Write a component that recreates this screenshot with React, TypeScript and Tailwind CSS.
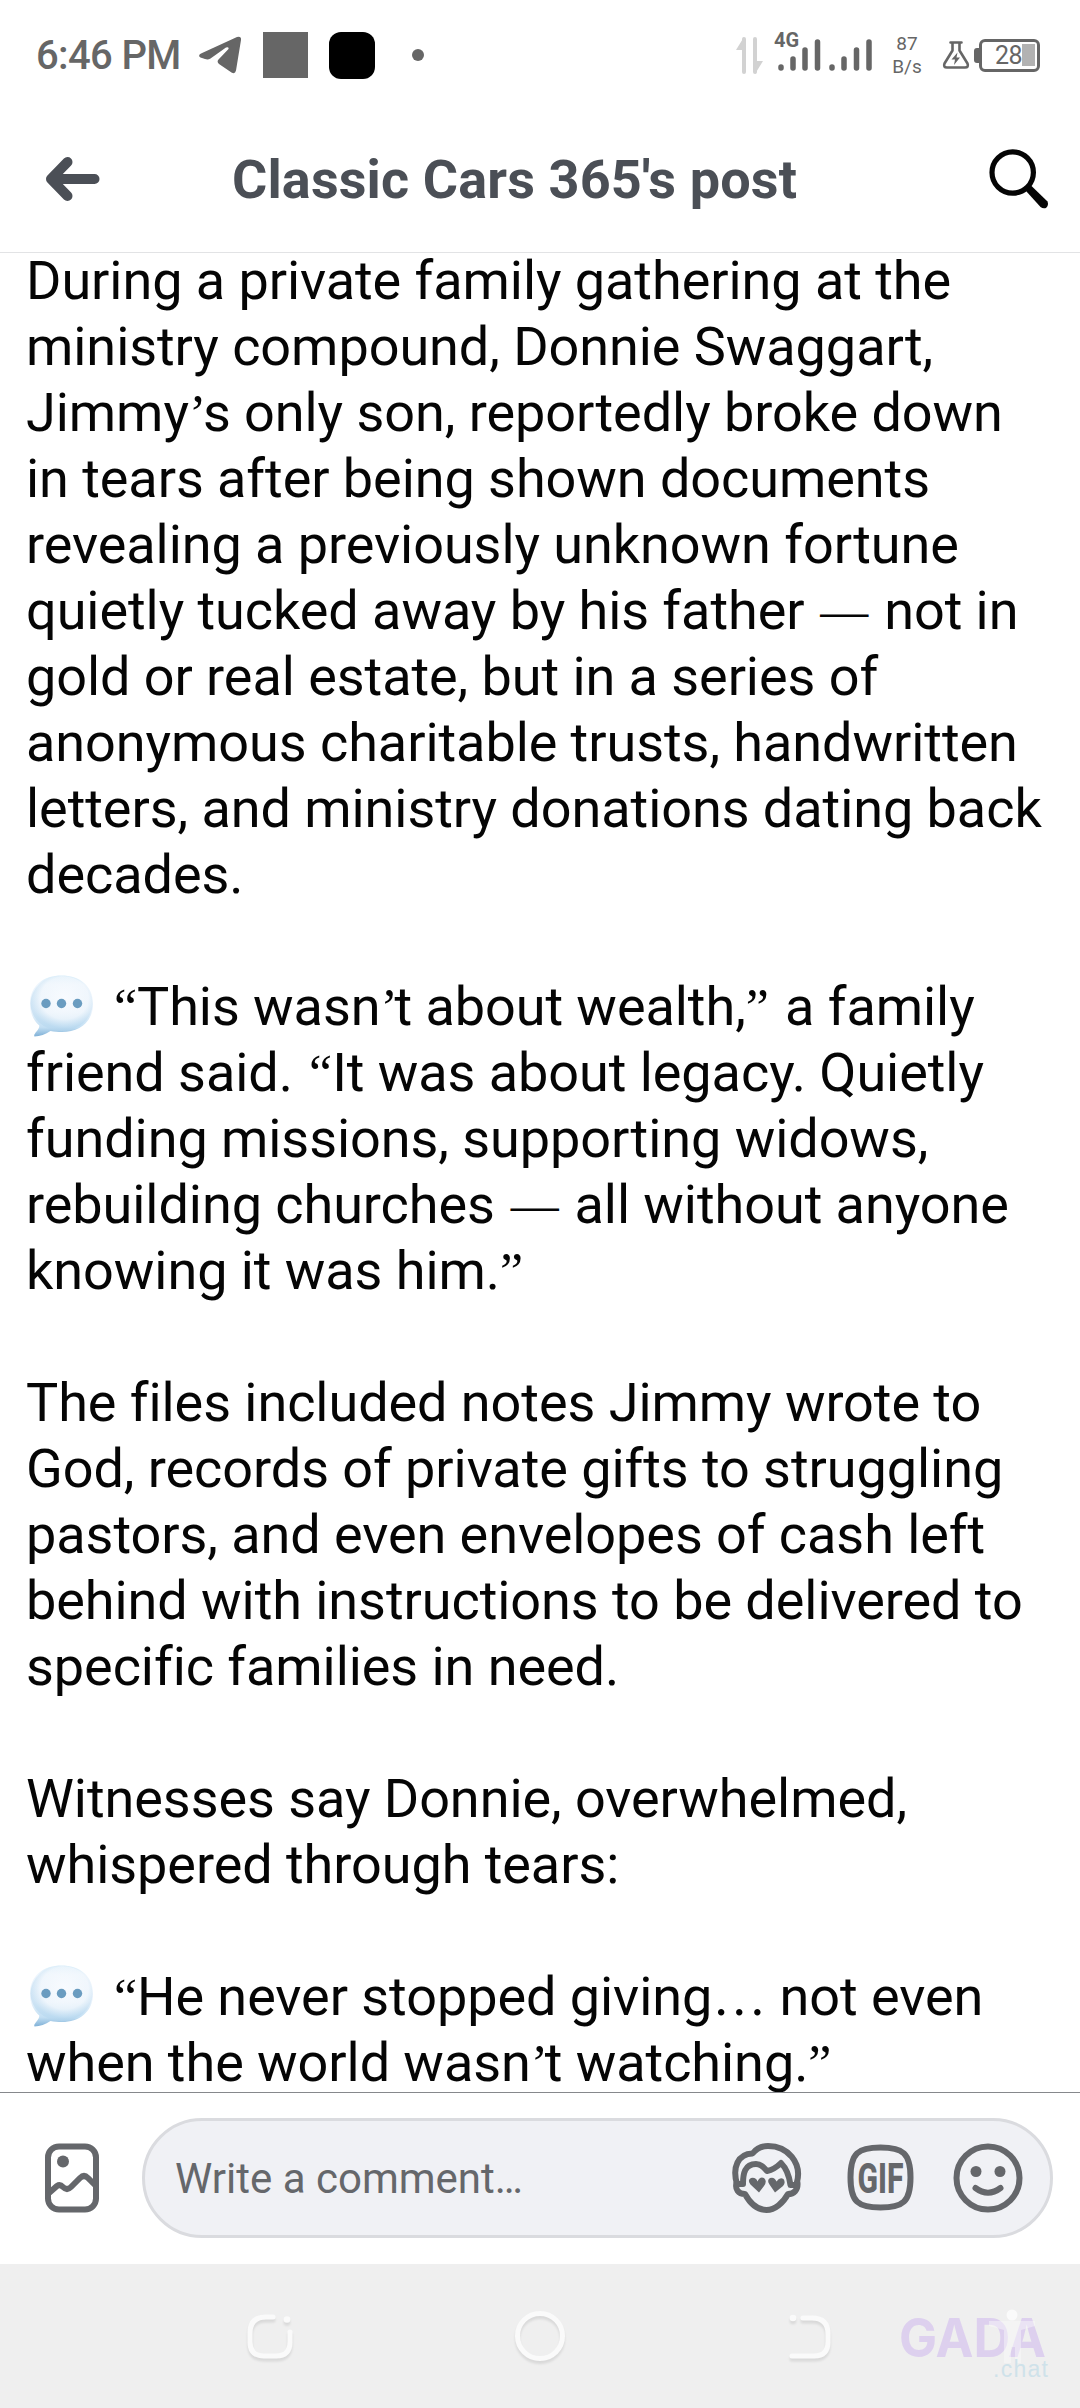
import React from "react";

const GREY = "#65676b";

function Bubble() {
  return (
    <svg className="ml-[4px] mr-[18px] inline-block h-[62px] w-[63px] align-[-12px]" viewBox="0 0 63 62">
      <defs>
        <linearGradient id="bub" x1="0" y1="0" x2="0" y2="1">
          <stop offset="0" stopColor="#d9edf9" />
          <stop offset="0.15" stopColor="#edf5fc" />
          <stop offset="0.6" stopColor="#e8f2fb" />
          <stop offset="0.85" stopColor="#c3dff3" />
          <stop offset="1" stopColor="#7fb0d6" />
        </linearGradient>
        <radialGradient id="shine" cx="0.55" cy="0.4" r="0.55">
          <stop offset="0" stopColor="#fafcff" stopOpacity="0.9" />
          <stop offset="0.7" stopColor="#f3f8fd" stopOpacity="0.6" />
          <stop offset="1" stopColor="#b4d6ee" stopOpacity="0.5" />
        </radialGradient>
      </defs>
      <path
        d="M31.5 0.5C49 0.5 63 10 63 29C63 47 49 57 32 57C28 57 24 56.600 20.500 56C15.500 59 10 61.500 4.500 61.500C3.500 60 5 58.500 6.500 56.500C8.500 54 9.500 52 9.300 50.500C3.500 45.500 0 38 0 29C0 10 14 0.500 31.500 0.500Z"
        fill="url(#bub)"
      />
      <ellipse cx="31.500" cy="28.500" rx="31" ry="27.500" fill="url(#shine)" />
      <circle cx="16" cy="28.500" r="4.700" fill="#6a9cc0" />
      <circle cx="31.500" cy="28.500" r="4.700" fill="#6a9cc0" />
      <circle cx="47.500" cy="28.500" r="4.700" fill="#6a9cc0" />
    </svg>
  );
}

const serif = "inline-block font-['Liberation_Serif',serif] leading-none tracking-normal";

// Curly punctuation, dashes and ellipses are set in the serif face.
const SERIF: Record<string, string> = {
  "“": `${serif} w-[26px] text-right text-[52px]`,
  "”": `${serif} w-[26px] text-left text-[52px]`,
  "’": `${serif} w-[14px] text-center text-[52px]`,
  "—": `${serif} w-[53px] text-center align-[2px] text-[48px]`,
  "…": `${serif} w-[54px] text-center text-[54px]`,
};

function Line({ text }: { text: string }) {
  return (
    <div className="h-[66px] whitespace-pre">
      {[...text].reduce<React.ReactNode[]>((out, ch, i) => {
        if (ch === "@") out.push(<Bubble key={i} />);
        else if (SERIF[ch]) out.push(<span key={i} className={SERIF[ch]}>{ch}</span>);
        else if (typeof out[out.length - 1] === "string") out[out.length - 1] = (out[out.length - 1] as string) + ch;
        else out.push(ch);
        return out;
      }, [])}
    </div>
  );
}

const LINES = [
  "During a private family gathering at the",
  "ministry compound, Donnie Swaggart,",
  "Jimmy’s only son, reportedly broke down",
  "in tears after being shown documents",
  "revealing a previously unknown fortune",
  "quietly tucked away by his father — not in",
  "gold or real estate, but in a series of",
  "anonymous charitable trusts, handwritten",
  "letters, and ministry donations dating back",
  "decades.",
  "",
  "@“This wasn’t about wealth,” a family",
  "friend said. “It was about legacy. Quietly",
  "funding missions, supporting widows,",
  "rebuilding churches — all without anyone",
  "knowing it was him.”",
  "",
  "The files included notes Jimmy wrote to",
  "God, records of private gifts to struggling",
  "pastors, and even envelopes of cash left",
  "behind with instructions to be delivered to",
  "specific families in need.",
  "",
  "Witnesses say Donnie, overwhelmed,",
  "whispered through tears:",
  "",
  "@“He never stopped giving… not even",
  "when the world wasn’t watching.”",
];

function StatusBar() {
  return (
    <div className="flex h-[110px] items-center pl-[36px] text-[#666]">
      <span className="w-[163px] whitespace-nowrap pt-[2px] text-[40px] font-medium leading-none tracking-[-0.650px]">6:46 PM</span>
      <svg className="h-[38px] w-[42px]" viewBox="0 0 42 38">
        <path
          d="M2 17.500L38 1Q42.500-.5 42 4L37 34.500Q36 38.500 32.500 36.500L20 28Q17.500 26 19.500 23.500L29.500 13Q30 10.500 27 11.500L11.500 22.500Q9 24 6 23L1.500 21.500Q-1.500 19.500 2 17.500Z"
          fill="currentColor"
        />
      </svg>
      <span className="ml-[22px] h-[46px] w-[45px] bg-[#666]" />
      <span className="ml-[21px] h-[47px] w-[46px] rounded-[12px] bg-black" />
      <span className="ml-[37px] size-[12px] rounded-full bg-[#666]" />
      <svg className="ml-[312px] h-[37px] w-[27px]" viewBox="0 0 27 37">
        <path d="M8 2V35M19 2V35" stroke="#d2d2d2" strokeWidth="4" strokeLinecap="round" />
        <path d="M8 0V13H0ZM19 37V24H27Z" fill="#d2d2d2" />
      </svg>
      <div className="relative ml-[11px] h-[40px] w-[98px]">
        <span className="absolute left-0 top-[-5px] text-[20px] font-bold leading-none">4G</span>
        <svg className="h-[40px] w-[98px]" viewBox="0 0 98 40">
          <path
            d="M7 32V33M19 24V33M31 15V33M43.500 7V33M58 32V33M70 24V33M82.500 15V33M95 7V33"
            stroke="currentColor"
            strokeWidth="5.500"
            strokeLinecap="round"
          />
        </svg>
      </div>
      <div className="ml-[18px] w-[34px] text-center text-[19px] leading-[23px]">
        <div>87</div>
        <div>B/s</div>
      </div>
      <svg className="ml-[18px] h-[30px] w-[28px]" viewBox="0 0 28 30">
        <path
          d="M8.500 2.500H19.500M10.500 3V10.500L2.500 23.500Q1 27.500 5 27.500H23Q27 27.500 25.500 23.500L17.500 10.500V3"
          stroke="currentColor" strokeWidth="2.600" fill="none" strokeLinecap="round" strokeLinejoin="round"
        />
        <path d="M15.500 12.500L9.500 19.500H13L12 25L18 17.500H14.500Z" fill="currentColor" />
      </svg>
      <span className="ml-[4px] h-[15px] w-[5px] rounded-l-[3px] bg-[#666]" />
      <div className="flex h-[33px] w-[61px] items-center justify-end rounded-[6px] border-3 border-[#666] pr-[2px]">
        <span className="text-[25px] leading-none tracking-[-0.5px]">28</span>
        <span className="h-[22px] w-[13px] bg-[#b2b2b2]" />
      </div>
    </div>
  );
}

function Header() {
  return (
    <div className="flex h-[143px] items-center border-b border-[#e2e3e5] pb-[5px] pl-[45px]">
      <svg className="h-[46px] w-[56px]" viewBox="0 0 56 46" fill="none" stroke="#4b4f56" strokeWidth="10" strokeLinecap="round" strokeLinejoin="round">
        <path d="M22.500 6L6 23L22.500 40M8 23H49.500" />
      </svg>
      <span className="ml-[131px] w-[602px] whitespace-nowrap pt-[2px] text-[54px] font-bold leading-none tracking-[0.120px] text-[#4b4f56]">
        Classic Cars 365's post
      </span>
      <svg className="ml-[155px] h-[60px] w-[62px]" viewBox="0 0 62 60" fill="none" stroke="#050505">
        <circle cx="23.700" cy="23.500" r="20.700" strokeWidth="5.200" />
        <path d="M37 42L42 36.500L58.500 52.500Q60 56 57 59Q54 60 51.500 58Z" fill="#050505" stroke="none" />
      </svg>
    </div>
  );
}

function CommentBar() {
  return (
    <div className="flex h-[172px] items-center border-t border-[#86888c] bg-white pb-[2px] pl-[44px]">
      <svg className="h-[70px] w-[56px]" viewBox="0 0 56 70" fill="none" stroke={GREY}>
        <rect x="4" y="3.500" width="48" height="63" rx="11" strokeWidth="6" />
        <path d="M5 50L13 43Q16 41 19 44Q23 48 27 44L36 35Q40 31 44 35L51 42" strokeWidth="6" />
        <circle cx="19" cy="18.500" r="6" fill={GREY} stroke="none" />
      </svg>
      <div className="ml-[42px] flex h-[120px] w-[911px] items-center rounded-full border-3 border-[#dadbdf] bg-[#f0f1f5] pl-[30px]">
        <span className="w-[557px] pt-[2px] text-[42px] leading-none text-[#65676b]">Write a comment…</span>
        <svg className="h-[70px] w-[70px]" viewBox="0 0 70 70" fill="none" stroke={GREY} strokeWidth="6" strokeLinecap="round" strokeLinejoin="round">
          <path d="M5 41C0 24 6 11 20.500 10.500C24.500 5.500 29 3 36 3C56 3 70 20 65 39" />
          <path d="M5 41H11C11 31 12.500 21 24 21C30 21 32 25 35 28C40 27 45 24 49 20C54 25 57 31 58.500 42H64" />
          <path d="M4.500 40C3 46 6 51 13 51C19 62 27 67 34.500 67C43 67 51 60 56 51C62 51 66 47 65.500 40" />
          <path d="M27 49.500L18.500 41.500Q15 37 19 35Q24 34 25.500 38.500Q28 33 32 35Q35.500 38 32 43Z" fill={GREY} stroke="none" />
          <path d="M43 49.500L37.500 41.500Q34.500 37 38 35Q42.500 33.500 44.500 38.500Q48 33.500 51.500 36Q54 39.500 51 43Z" fill={GREY} stroke="none" />
        </svg>
        <svg className="ml-[45px] h-[67px] w-[67px]" viewBox="0 0 67 67" fill="none" stroke={GREY}>
          <path d="M33.500 3.500C56 3.500 63.500 9 63.500 33.500C63.500 58 56 63.500 33.500 63.500C11 63.500 3.500 58 3.500 33.500C3.500 9 11 3.500 33.500 3.500Z" strokeWidth="6" />
          <text x="10.500" y="48.500" textLength="46" lengthAdjust="spacingAndGlyphs" fontSize="42" fontWeight="800" fontFamily="Roboto, sans-serif" fill={GREY} stroke="none">GIF</text>
        </svg>
        <svg className="ml-[39px] h-[70px] w-[70px]" viewBox="0 0 70 70" fill="none" stroke={GREY} strokeWidth="6">
          <circle cx="35" cy="35" r="31.500" />
          <circle cx="23" cy="28.500" r="5.500" fill={GREY} stroke="none" />
          <circle cx="47" cy="28.500" r="5.500" fill={GREY} stroke="none" />
          <path d="M22.500 45Q35 54.500 47.500 45" strokeLinecap="round" />
        </svg>
      </div>
    </div>
  );
}

function NavBar() {
  const icon = "h-[60px] w-[60px] drop-shadow-[0_3px_1px_rgba(0,0,0,0.090)]";
  return (
    <div className="relative flex h-[144px] items-center justify-between bg-[#efefef] px-[240px]">
      <svg className={icon} viewBox="0 0 60 60" fill="none" stroke="#fafafa" strokeWidth="5" strokeLinecap="round">
        <path d="M33 11H26Q10 11 10 27V36Q10 50 24 50H36Q50 50 50 36V26" />
        <circle cx="47" cy="13.500" r="3.300" fill="#fafafa" stroke="none" />
      </svg>
      <svg className={icon} viewBox="0 0 60 60" fill="none" stroke="#fafafa" strokeWidth="5">
        <circle cx="30" cy="30" r="22.500" />
      </svg>
      <svg className={icon} viewBox="0 0 60 60" fill="none" stroke="#fafafa" strokeWidth="5" strokeLinecap="round">
        <path d="M23 12H32Q48 12 48 28V36Q48 50 34 50H12" />
        <circle cx="13" cy="12" r="3.300" fill="#fafafa" stroke="none" />
      </svg>
      <svg className="absolute left-[890px] top-[40px] h-[90px] w-[180px]" viewBox="0 0 180 90">
        <text x="9" y="53" textLength="147" lengthAdjust="spacingAndGlyphs" fontSize="53" fontWeight="700" fill="#ddd0ee" fontFamily="Inter, sans-serif">GADA</text>
        <circle cx="122" cy="11" r="5.500" fill="#fafafa" />
        <path d="M99 17L145 17V22L131 26V59H125V43H121V59H114V26L99 22Z" fill="#fafafa" fillOpacity="0.450" />
        <text x="103" y="73" textLength="55" fontSize="23" fill="#cfe2ea" fontFamily="Liberation Sans, sans-serif">.chat</text>
      </svg>
    </div>
  );
}

export default function App() {
  return (
    <div className="flex h-[2408px] w-[1080px] flex-col overflow-hidden bg-white font-[Roboto,sans-serif]">
      <StatusBar />
      <Header />
      <main className="h-[1839px] overflow-hidden pl-[26px] text-[54px] leading-[66px] tracking-[-0.060px] text-[#050505]">
        <div className="-mt-[5px]">
          {LINES.map((t, i) => (
            <Line key={i} text={t} />
          ))}
        </div>
      </main>
      <CommentBar />
      <NavBar />
    </div>
  );
}
